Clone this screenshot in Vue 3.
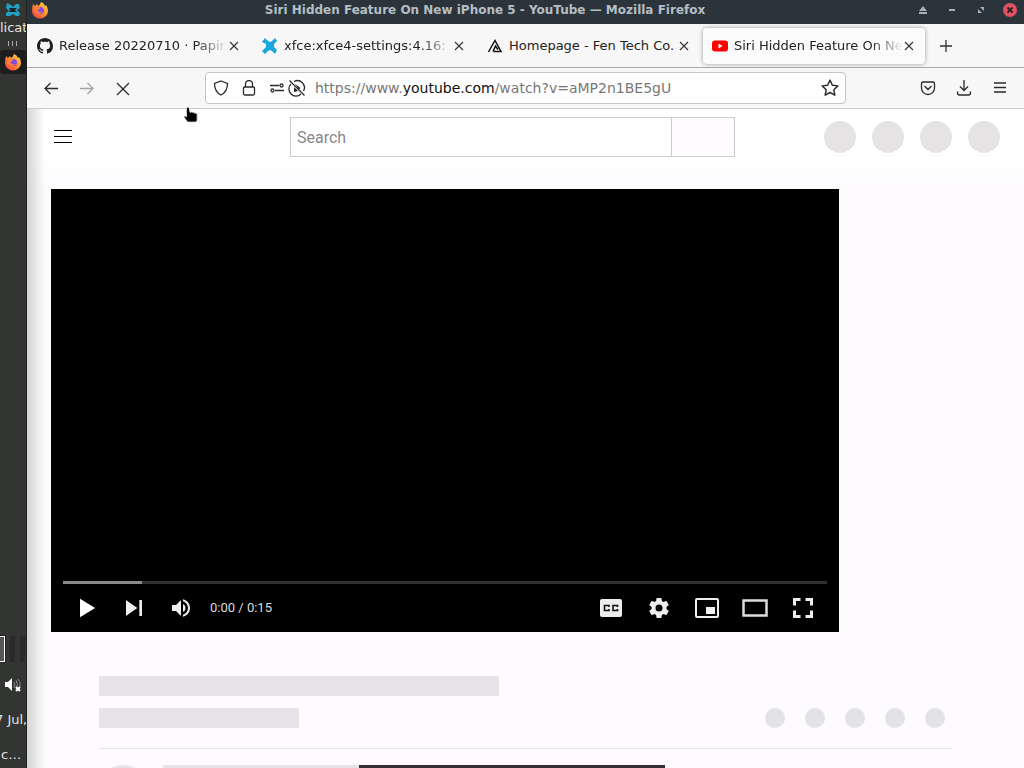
<template>
  <div class="desktop">
    <aside class="panel">
      <svg class="panel-icon" viewBox="0 0 16 16" width="16" height="16">
        <path d="M2 1l4 2 2 2 3-3 3 0 1 4-3 2 3 3-1 3-3 0-3-2-3 2-4 0 0-3 3-2-3-3z" fill="#249fc4" />
        <path d="M4 6l4 0 4 0-2 2 2 2-4 0-4 0 1-2z" fill="#14262d" />
      </svg>
      <span class="panel-text panel-menu">licat</span>
      <svg class="panel-grip" viewBox="0 0 12 5" width="12" height="5">
        <path d="M1.500 0v5M5.500 0v5M9.500 0v5" stroke="#aaa" />
      </svg>
      <div class="panel-task">
        <svg viewBox="0 0 18 18" width="18" height="18">
          <use href="#firefox" />
        </svg>
      </div>
      <div class="workspaces"></div>
      <svg class="panel-volume" viewBox="0 0 18 18" width="18" height="18">
        <path d="M1 6h3l4-4v13l-4-4H1z" fill="#fff" />
        <path d="M10 6q2 3 0 6M12 4q3 5 0 9M14 3q4 5 1 9" fill="none" stroke="#888" />
        <path d="M12 11l4 4M16 11l-4 4" stroke="#fff" stroke-width="2" />
      </svg>
      <span class="panel-text panel-date">7 Jul,</span>
      <span class="panel-text panel-clock">c…</span>
    </aside>

    <div class="window">
      <div class="titlebar">
        <svg viewBox="0 0 18 18" width="18" height="18">
          <defs>
            <linearGradient id="flame" x1="1" y1="0" x2="0" y2="1">
              <stop offset="0" stop-color="#ffe34a" />
              <stop offset="0.5" stop-color="#ff8a2a" />
              <stop offset="1" stop-color="#f0304f" />
            </linearGradient>
            <g id="firefox">
              <path d="M2 3l2 2 2-2 1 2q2-1 3-4 3 1 4 4l1-1q2 3 2 6a8 7.500 0 0 1-16 0q0-4 1-7z" fill="url(#flame)" />
              <circle cx="9.500" cy="9.500" r="3.500" fill="#8a4bdc" />
              <path d="M4 6q3-1 5 1-1 2-3 2 1 3 6 2-3 3-7 1-3-2-1-6z" fill="#ff8239" />
            </g>
          </defs>
          <use href="#firefox" />
        </svg>
        <span class="window-title">Siri Hidden Feature On New iPhone 5 - YouTube — Mozilla Firefox</span>
        <div class="window-buttons">
          <button aria-label="Shade">
            <svg viewBox="0 0 10 10" width="10" height="10"><path d="M5 1l4 5H1zM1 7h8v2H1z" fill="#a7b1b7" /></svg>
          </button>
          <button aria-label="Minimize">
            <svg viewBox="0 0 10 10" width="10" height="10"><path d="M2 4h6v2H2z" fill="#a7b1b7" /></svg>
          </button>
          <button aria-label="Restore">
            <svg viewBox="0 0 10 10" width="10" height="10"><path d="M4 2h4v4zM2 4v4h4z" fill="#a7b1b7" /></svg>
          </button>
          <button aria-label="Close">
            <svg viewBox="0 0 14 14" width="14" height="14">
              <circle cx="7" cy="7" r="7" fill="#e05260" />
              <path d="M4.500 4.500l5 5m0-5l-5 5" stroke="#2b2025" stroke-width="1.800" />
            </svg>
          </button>
        </div>
      </div>

      <div class="tabs">
        <div v-for="tab in tabs" :key="tab.icon" class="tab" :class="{ active: tab.active }">
          <svg v-if="tab.icon === 'github'" viewBox="0 0 16 16" width="16" height="16">
            <path fill="#1b1f23" d="M8 0C3.580 0 0 3.580 0 8c0 3.540 2.290 6.530 5.470 7.590.4.070.55-.17.55-.38 0-.19-.01-.82-.01-1.490-2.010.37-2.530-.49-2.690-.94-.09-.23-.48-.94-.82-1.130-.28-.15-.68-.52-.01-.53.63-.01 1.080.58 1.230.82.72 1.210 1.870.87 2.330.66.070-.52.28-.87.51-1.070-1.780-.2-3.640-.89-3.640-3.950 0-.87.31-1.590.82-2.150-.08-.2-.36-1.020.08-2.120 0 0 .67-.21 2.200.82.64-.18 1.320-.27 2-.27s1.360.090 2 .27c1.530-1.040 2.200-.82 2.200-.82.44 1.100.16 1.920.08 2.120.51.56.82 1.270.82 2.150 0 3.070-1.870 3.750-3.650 3.950.29.25.54.73.54 1.480 0 1.070-.01 1.930-.01 2.200 0 .21.15.46.55.38A8.010 8.010 0 0 0 16 8c0-4.420-3.580-8-8-8z" />
          </svg>
          <svg v-else-if="tab.icon === 'xfce'" viewBox="0 0 16 16" width="16" height="16">
            <path d="M3 0l3 3 2 1 2-1 3-3 2 3-3 3v3l3 3-2 4-3-3-2-1-2 1-3 3-3-3 4-4V6L0 4z" fill="#1ba7dc" />
          </svg>
          <svg v-else-if="tab.icon === 'fen'" viewBox="0 0 16 16" width="16" height="16">
            <path d="M1.500 14L8 2.500l6 11H6.500M6 13.500L8.500 8l2.500 3.500" fill="none" stroke="#111" stroke-width="1.500" />
          </svg>
          <svg v-else viewBox="0 0 16 16" width="16" height="16">
            <rect x="0" y="2.500" width="16" height="11" rx="3" fill="#f00" />
            <path d="M6.500 5.500v5l4-2.500z" fill="#fff" />
          </svg>
          <span class="tab-title">{{ tab.title }}</span>
          <button class="tab-close" aria-label="Close tab">
            <svg viewBox="0 0 10 10" width="10" height="10"><path d="M1 1l8 8M9 1L1 9" stroke="#333" stroke-width="1.100" /></svg>
          </button>
        </div>
        <button class="new-tab" aria-label="New tab">
          <svg viewBox="0 0 12 12" width="12" height="12"><path d="M6 0v12M0 6h12" stroke="#333" stroke-width="1.300" /></svg>
        </button>
      </div>

      <div class="toolbar">
        <button aria-label="Back">
          <svg viewBox="0 0 16 16" width="16" height="16"><path d="M15 8.500H2M7.500 3L2 8.500l5.500 5.500" /></svg>
        </button>
        <button aria-label="Forward" class="dim">
          <svg viewBox="0 0 16 16" width="16" height="16"><path d="M1 8.500h13M8.500 3L14 8.500 8.500 14" /></svg>
        </button>
        <button aria-label="Stop">
          <svg viewBox="0 0 16 16" width="16" height="16"><path d="M2 3l12 12M14 3L2 15" /></svg>
        </button>
        <div class="urlbar">
          <svg class="shield" viewBox="0 0 16 16" width="16" height="16"><path d="M8 1l6.500 2.500c0 5-1.500 9-6.500 11.500C3 12.500 1.500 8.500 1.500 3.500z" /></svg>
          <svg class="lock" viewBox="0 0 16 16" width="16" height="16"><path d="M4.500 7V4a3.500 3.500 0 0 1 7 0v3M3.500 7h9q1 0 1 1v5.500q0 1.500-1.500 1.500H4q-1.500 0-1.500-1.500V8q0-1 1-1z" /></svg>
          <svg class="perms" viewBox="0 0 16 16" width="16" height="16"><path d="M1 5.500h9M6 10.500h9" /><circle cx="12.500" cy="5.500" r="1.500" /><circle cx="3.500" cy="10.500" r="1.500" /></svg>
          <svg class="autoplay" viewBox="0 0 18 18" width="18" height="18">
            <path d="M6 2.500A7 7 0 0 1 15.500 12M13 15A7 7 0 0 1 3 5M1.500 1.500l15 15" />
            <path d="M7 5l5.500 4-1.500 1.500zM6 8l4 4-4 1z" fill="#222" stroke="none" />
          </svg>
          <a class="url" href="#">https://www.<b>youtube.com</b>/watch?v=aMP2n1BE5gU</a>
          <svg viewBox="0 0 16 16" width="18" height="18"><path stroke-linejoin="round" d="M8 1l2.100 4.500 4.900.6-3.600 3.400.9 4.900L8 12l-4.300 2.400.9-4.900L1 6.100l4.900-.6z" /></svg>
        </div>
        <button aria-label="Save to Pocket">
          <svg viewBox="0 0 16 16" width="16" height="16"><path d="M3 2h10q1.500 0 1.500 1.500V8a6.500 6.500 0 0 1-13 0V3.500Q1.500 2 3 2zM4.500 6L8 9.500 11.500 6" /></svg>
        </button>
        <button aria-label="Downloads">
          <svg viewBox="0 0 16 16" width="16" height="16"><path d="M8 0v10.500M4 6.500l4 4 4-4M1.500 11.500V13q0 2 2 2h9q2 0 2-2v-1.500" /></svg>
        </button>
        <button aria-label="Menu">
          <svg viewBox="0 0 16 16" width="16" height="16"><path d="M2 3h12M2 7.500h12M2 12h12" /></svg>
        </button>
      </div>

      <div class="page">
        <header class="masthead">
          <button class="guide" aria-label="Guide">
            <svg viewBox="0 0 18 14" width="18" height="14"><path d="M0 .5h18M0 6.500h18M0 12.500h18" stroke="#030303" /></svg>
          </button>
          <form class="search" @submit.prevent>
            <input v-model="query" type="text" placeholder="Search" aria-label="Search">
            <button aria-label="Search"></button>
          </form>
          <div class="masthead-skeleton">
            <i v-for="n in 4" :key="n"></i>
          </div>
        </header>

        <main>
          <section class="player">
            <div class="progress">
              <div class="loaded" :style="{ width: loaded + '%' }"></div>
            </div>
            <div class="controls">
              <button aria-label="Play">
                <svg viewBox="0 0 36 36" width="42" height="42"><path d="M12 10v16l13-8z" fill="#fff" /></svg>
              </button>
              <button aria-label="Next">
                <svg viewBox="0 0 36 36" width="48" height="48"><path d="M12 24l8.500-6L12 12zM22 12v12h2V12z" /></svg>
              </button>
              <button aria-label="Mute">
                <svg viewBox="-1 0 36 36" width="36" height="36">
                  <path d="M8 21h4l5 5V10l-5 5H8zM19 14v8c1.480-.68 2.500-2.230 2.500-4s-1.020-3.260-2.500-4zM19 11.290c2.890.86 5 3.540 5 6.710s-2.110 5.850-5 6.710v2.060c4.010-.91 7-4.490 7-8.770s-2.990-7.860-7-8.770z" />
                </svg>
              </button>
              <span class="time">0:00 / 0:15</span>
              <div class="controls-right">
                <button aria-label="Subtitles">
                  <svg viewBox="0 0 22 18" width="22" height="18">
                    <rect width="22" height="18" rx="2" />
                    <path d="M9 8V6.500H4.500v5H9V10M17.500 8V6.500H13v5h4.500V10" fill="none" stroke="#111" stroke-width="1.600" />
                  </svg>
                </button>
                <button aria-label="Settings">
                  <svg viewBox="0 0 24 24" width="24" height="24">
                    <path d="M19.430 12.980c.04-.32.07-.64.07-.98s-.03-.66-.07-.98l2.110-1.650c.19-.15.24-.42.12-.64l-2-3.460c-.12-.22-.39-.3-.61-.22l-2.490 1c-.52-.4-1.080-.73-1.690-.98l-.38-2.650C14.460 2.180 14.250 2 14 2h-4c-.25 0-.46.18-.49.42l-.38 2.650c-.61.25-1.170.59-1.690.98l-2.490-1c-.23-.09-.49 0-.61.22l-2 3.460c-.13.22-.07.49.12.64l2.110 1.650c-.04.32-.07.65-.07.98s.03.66.07.98l-2.110 1.650c-.19.15-.24.42-.12.64l2 3.460c.12.22.39.3.61.22l2.490-1c.52.4 1.080.73 1.690.98l.38 2.650c.03.24.24.42.49.42h4c.25 0 .46-.18.49-.42l.38-2.650c.61-.25 1.170-.59 1.690-.98l2.490 1c.23.09.49 0 .61-.22l2-3.460c.12-.22.07-.49-.12-.64zM12 15.500a3.500 3.500 0 1 1 0-7 3.500 3.500 0 0 1 0 7z" />
                  </svg>
                </button>
                <button aria-label="Miniplayer">
                  <svg viewBox="0 0 24 20" width="24" height="20">
                    <rect x="1" y="1" width="22" height="18" rx="1" fill="none" stroke="#eee" stroke-width="2" />
                    <path d="M11 9h9v7h-9z" />
                  </svg>
                </button>
                <button aria-label="Theater mode">
                  <svg viewBox="0 0 26 18" width="26" height="18">
                    <path d="M1.500 1.500h23v15h-23z" fill="none" stroke="#ddd" stroke-width="2.500" />
                  </svg>
                </button>
                <button aria-label="Full screen">
                  <svg viewBox="0 0 20 20" width="20" height="20">
                    <path d="M1.500 7.500v-6h6M12.500 1.500h6v6M18.500 12.500v6h-6M7.500 18.500h-6v-6" fill="none" stroke="#eee" stroke-width="3" />
                  </svg>
                </button>
              </div>
            </div>
          </section>

          <section class="meta">
            <div class="bar bar-title"></div>
            <div class="meta-row">
              <div class="bar bar-views"></div>
              <div class="actions">
                <i v-for="n in 5" :key="n"></i>
              </div>
            </div>
            <div class="owner">
              <div class="avatar"></div>
              <div class="bar bar-owner"></div>
            </div>
          </section>
        </main>
      </div>
    </div>

    <div class="dock-edge"></div>

    <svg class="cursor" viewBox="0 0 17 20" width="15" height="18">
      <path d="M4 2q2-2 3 0l1 5q2-1 3 0 2-1 2 1 3-1 3 1v7l-1 2H5l-4-6q0-2 3 0z" fill="#000" stroke="#ddd" />
    </svg>
  </div>
</template>

<script setup>
import { ref } from 'vue';

const tabs = ref([
  { icon: 'github', title: 'Release 20220710 · Papir', active: false },
  { icon: 'xfce', title: 'xfce:xfce4-settings:4.16:', active: false },
  { icon: 'fen', title: 'Homepage - Fen Tech Co.', active: false },
  { icon: 'youtube', title: 'Siri Hidden Feature On Ne', active: true },
]);

const query = ref('');

// Buffered part of the video, in percent
const loaded = ref(10.3);
</script>

<style>
body {
  margin: 0;
  overflow: hidden;
}
</style>

<style scoped>
.desktop {
  position: relative;
  display: flex;
  height: 100vh;
  overflow: hidden;
  font-family: "DejaVu Sans", sans-serif;
}

button {
  display: flex;
  align-items: center;
  justify-content: center;
  padding: 0;
  border: 0;
  background: none;
}

svg {
  flex: none;
}

/* Desktop panel */
.panel {
  flex: none;
  display: flex;
  flex-direction: column;
  width: 26px;
  overflow: hidden;
  background: #333532;
  border-right: 1px solid #222;
}

.panel-icon {
  margin: 2px 5px;
}

.panel-text {
  flex: none;
  color: #e4e4e4;
  font-size: 13px;
  line-height: 16px;
  white-space: nowrap;
}

.panel-grip {
  margin: 5px 7px 4px;
}

.panel-task {
  display: flex;
  align-items: center;
  justify-content: center;
  height: 24px;
  background: #1c1d1c;
  border-radius: 3px;
}

.workspaces {
  box-sizing: border-box;
  width: 5px;
  height: 26px;
  margin-top: auto;
  background: #555;
  border: 1px solid #fff;
  border-left: 0;
  box-shadow: 0 0 0 1px #222, 20px 0 0 0 #292a28, 10px 0 0 0 #292a28;
}

.panel-volume {
  margin: 14px 4px 18px;
}

.panel-date {
  margin: 0 0 19px -5px;
}

.panel-clock {
  margin: 0 0 5px 1px;
}

/* Window frame */
.window {
  flex: 1;
  display: flex;
  flex-direction: column;
  min-width: 0;
}

.titlebar {
  flex: none;
  display: flex;
  align-items: center;
  height: 20px;
  padding: 0 0 4px 4px;
  background: #2b343a;
}

.window-title {
  flex: 1;
  margin-left: 12px;
  overflow: hidden;
  color: #b4bec4;
  font-size: 12px;
  font-weight: bold;
  line-height: 20px;
  text-align: center;
  white-space: nowrap;
}

.window-buttons {
  display: flex;
  gap: 1px;
}

.window-buttons button {
  width: 28px;
  height: 20px;
}

/* Tabs */
.tabs {
  flex: none;
  display: flex;
  align-items: center;
  height: 43px;
  padding-left: 1px;
  background: #f7f7f7;
  border-bottom: 1px solid #a9a9a9;
}

.tab {
  box-sizing: border-box;
  display: flex;
  align-items: center;
  flex: 0 1 222px;
  min-width: 0;
  height: 36px;
  margin-right: 3px;
  padding: 0 10px 0 9px;
  border-radius: 4px;
}

.tab.active {
  background: #fbfbfb;
  box-shadow: 0 0 4px #999;
}

.tab-title {
  flex: 1;
  min-width: 0;
  margin-left: 6px;
  overflow: hidden;
  color: #222;
  font-size: 13px;
  line-height: 20px;
  white-space: nowrap;
  mask-image: linear-gradient(to left, transparent, #000 32px);
}

.tab:nth-child(3) .tab-title {
  mask-image: none;
}

.tab-close {
  width: 12px;
  height: 20px;
}

.new-tab {
  width: 36px;
  height: 36px;
}

/* Toolbar */
.toolbar {
  flex: none;
  display: flex;
  align-items: center;
  height: 40px;
  padding: 0 6px;
  background: #f7f7f7;
  border-bottom: 1px solid #ccc;
}

.toolbar button {
  width: 36px;
  height: 32px;
}

.toolbar svg {
  fill: none;
  stroke: #2b2b2b;
  stroke-width: 1.3;
}

.toolbar .dim {
  opacity: 0.4;
}

.urlbar {
  box-sizing: border-box;
  flex: 1;
  display: flex;
  align-items: center;
  min-width: 0;
  height: 32px;
  margin: 0 64px;
  padding: 0 6px 0 7px;
  background: #fff;
  border: 1px solid #c4c4c4;
  border-radius: 4px;
}

.shield,
.lock {
  margin-right: 12px;
}

.perms {
  margin-right: 3px;
}

.url {
  flex: 1;
  min-width: 0;
  margin-left: 9px;
  overflow: hidden;
  color: #777;
  font-size: 14px;
  line-height: 20px;
  text-decoration: none;
  white-space: nowrap;
}

.url b {
  color: #111;
  font-weight: normal;
}

/* Page */
.page {
  flex: 1;
  min-height: 0;
  overflow: hidden;
  background: linear-gradient(to right, #d4d4d4, rgba(255, 255, 255, 0) 18px), linear-gradient(#fff 48px, #fdfbfe 80px);
}

.masthead {
  display: grid;
  grid-template-columns: minmax(24px, 239px) minmax(160px, 445px) 1fr;
  align-items: center;
  height: 56px;
  padding: 0 24px;
}

.guide {
  width: 24px;
  height: 24px;
}

.search {
  display: flex;
  height: 40px;
}

.search input {
  box-sizing: border-box;
  flex: 1;
  min-width: 0;
  padding: 2px 6px 0;
  background: #fff;
  border: 1px solid #ccc;
  border-radius: 0;
  font: 16px/24px Roboto, sans-serif;
}

.search input::placeholder {
  color: #888;
  opacity: 1;
}

.search button {
  box-sizing: border-box;
  width: 63px;
  background: #fefcff;
  border: 1px solid #ccc;
  border-left: 0;
}

.masthead-skeleton {
  display: flex;
  gap: 16px;
  justify-content: flex-end;
}

.masthead-skeleton i {
  width: 32px;
  height: 32px;
  background: #e6e3e5;
  border-radius: 50%;
}

/* Player */
.player {
  box-sizing: border-box;
  display: flex;
  flex-direction: column;
  justify-content: flex-end;
  width: calc(100% - 209px);
  aspect-ratio: 16 / 9;
  margin: 24px 0 0 24px;
  padding: 0 12px;
  background: #000;
}

.progress {
  height: 3px;
  background: #303030;
}

.loaded {
  height: 3px;
  background: #8a8a8a;
}

.controls {
  display: flex;
  align-items: center;
  height: 48px;
}

.controls button {
  width: 47px;
  height: 48px;
}

.controls svg {
  fill: #eee;
}

.time {
  margin-left: 6px;
  color: #ddd;
  font: 13px/20px Roboto, sans-serif;
}

.controls-right {
  display: flex;
  margin-left: auto;
}

.controls-right button {
  width: 48px;
}

/* Loading placeholders */
.meta {
  margin: 44px 71px 0 72px;
}

.bar {
  height: 20px;
  background: #e6e3e6;
}

.bar-title {
  width: 400px;
  max-width: 100%;
}

.bar-views {
  width: 200px;
}

.meta-row {
  display: flex;
  justify-content: space-between;
  padding: 12px 8px 20px 0;
  border-bottom: 1px solid #e8e5e9;
}

.actions {
  display: flex;
  gap: 20px;
}

.actions i {
  width: 20px;
  height: 20px;
  background: #e3e2e5;
  border-radius: 50%;
}

.owner {
  display: flex;
  gap: 16px;
  padding-top: 16px;
}

.avatar {
  width: 48px;
  height: 48px;
  background: #e6e3e6;
  border-radius: 50%;
}

.bar-owner {
  width: 196px;
}

/* Things lying over the window */
.dock-edge {
  position: absolute;
  left: 359px;
  bottom: 0;
  width: 306px;
  height: 3px;
  background: #333035;
}

.cursor {
  position: absolute;
  left: 183px;
  top: 106px;
}
</style>
